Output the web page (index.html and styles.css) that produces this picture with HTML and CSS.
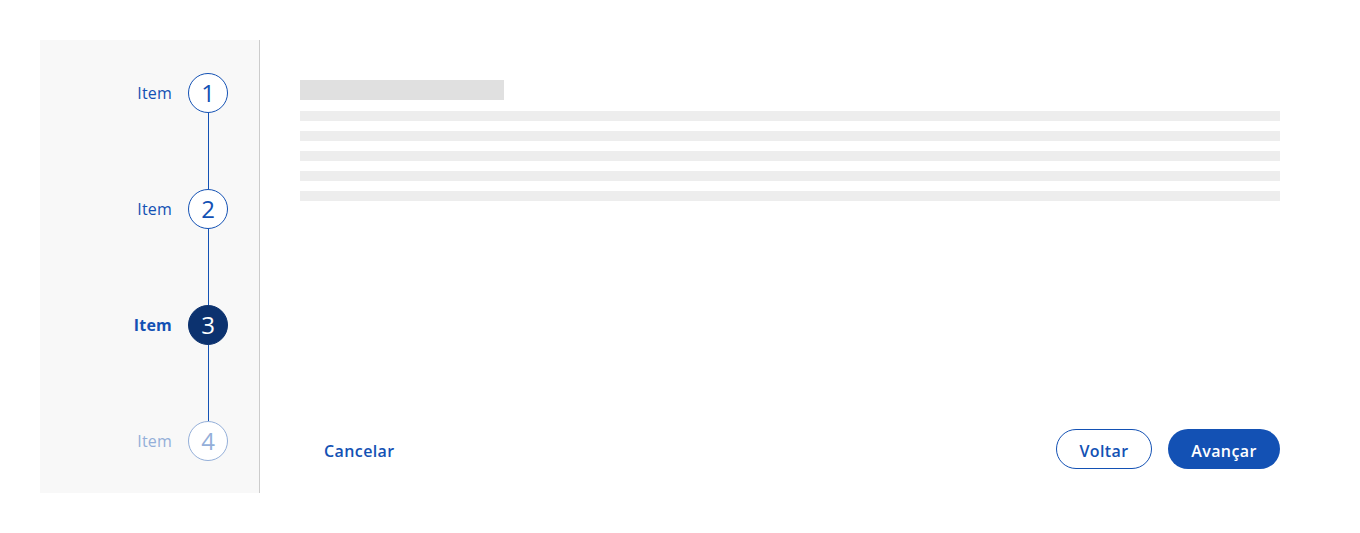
FILE: index.html
```html
<!DOCTYPE html>
<html lang="pt-BR">
<head>
<meta charset="utf-8">
<title>Wizard</title>
<link rel="stylesheet" href="styles.css">
</head>
<body>
<div class="page">
  <div class="wizard">
    <nav class="steps">
      <div class="step">
        <span class="step-label">Item</span>
        <span class="step-num">1</span>
      </div>
      <div class="connector"><span class="connector-line"></span></div>
      <div class="step">
        <span class="step-label">Item</span>
        <span class="step-num">2</span>
      </div>
      <div class="connector"><span class="connector-line"></span></div>
      <div class="step step-active">
        <span class="step-label">Item</span>
        <span class="step-num">3</span>
      </div>
      <div class="connector"><span class="connector-line"></span></div>
      <div class="step step-disabled">
        <span class="step-label">Item</span>
        <span class="step-num">4</span>
      </div>
    </nav>
    <section class="panel">
      <div class="skeleton">
        <div class="sk-title"></div>
        <div class="sk-line"></div>
        <div class="sk-line"></div>
        <div class="sk-line"></div>
        <div class="sk-line"></div>
        <div class="sk-line"></div>
      </div>
      <div class="actions">
        <button class="btn btn-text">Cancelar</button>
        <div class="actions-right">
          <button class="btn btn-secondary">Voltar</button>
          <button class="btn btn-primary">Avançar</button>
        </div>
      </div>
    </section>
  </div>
</div>
</body>
</html>
```
FILE: styles.css
```css
* { box-sizing: border-box; }
html, body { margin: 0; padding: 0; background: #fff; }
body {
  font-family: "Open Sans", "Noto Sans", sans-serif;
  color: #1351b4;
}
.page {
  padding: 40px;
}
.wizard {
  display: flex;
  height: 453px;
}
.steps {
  width: 220px;
  flex: none;
  background: #f8f8f8;
  border-right: 1px solid #cccccc;
  padding: 33px 0 32px;
  display: flex;
  flex-direction: column;
}
.step {
  display: flex;
  align-items: center;
  justify-content: flex-end;
  padding-right: 31px;
  gap: 16px;
  height: 40px;
}
.step-label {
  font-size: 16px;
  color: #1351b4;
  line-height: 20px;
  letter-spacing: 0.2px;
}
.step-num {
  width: 40px;
  height: 40px;
  border: 1px solid #1351b4;
  border-radius: 50%;
  background: #fff;
  display: flex;
  align-items: center;
  justify-content: center;
  font-size: 24px;
  font-weight: 400;
  color: #1351b4;
  line-height: 1;
}
.step-active .step-label { font-weight: 700; }
.step-active .step-num {
  background: #0c326f;
  border-color: #0c326f;
  color: #fff;
}
.step-disabled .step-label { color: #94afd9; }
.step-disabled .step-num {
  border-color: #94afd9;
  color: #94afd9;
}
.connector {
  height: 76px;
  display: flex;
  justify-content: flex-end;
  padding-right: 50px;
}
.connector-line {
  width: 1px;
  background: #1351b4;
}
.panel {
  flex: 1;
  display: flex;
  flex-direction: column;
  padding: 40px 40px 24px;
}
.skeleton {
  flex: 1;
  display: flex;
  flex-direction: column;
  gap: 10px;
}
.sk-title {
  width: 204px;
  height: 20px;
  background: #e0e0e0;
  margin-bottom: 1px;
}
.sk-line {
  height: 10px;
  background: #ededed;
}
.actions {
  display: flex;
  align-items: center;
  justify-content: space-between;
}
.actions-right {
  display: flex;
  gap: 16px;
}
.btn {
  font-family: inherit;
  font-size: 16px;
  font-weight: 600;
  letter-spacing: 0.4px;
  height: 40px;
  border-radius: 20px;
  padding: 3px 24px 0 23px;
  border: 1px solid transparent;
  background: transparent;
  color: #1351b4;
  cursor: pointer;
}
.btn-secondary {
  background: #fff;
  border-color: #1351b4;
  width: 96px;
  padding: 3px 0 0;
}
.btn-primary {
  background: #1351b4;
  color: #fff;
  width: 112px;
  padding: 3px 0 0;
}
```
